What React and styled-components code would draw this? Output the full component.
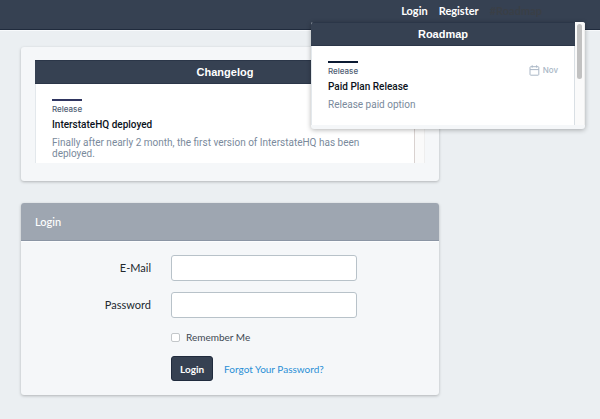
import React, { useState } from "react";
import styled, { createGlobalStyle } from "styled-components";

const GlobalStyle = createGlobalStyle`
  * {
    box-sizing: border-box;
  }

  body {
    margin: 0;
    background-color: #ebeff2;
    font-family: Lato, sans-serif;
    font-size: 11px;
    line-height: 16px;
    color: #22292f;
  }
`;

const NavBar = styled.nav`
  display: flex;
  justify-content: flex-end;
  gap: 11px;
  height: 30px;
  padding: 3px 58px 0 0;
  background-color: #364152;
  border-bottom: 1px solid #202b3d;
  box-shadow: 0 1px 0 #f8fafc;
`;

const NavLink = styled.a`
  color: ${({ $active }) => ($active ? "#3a3f46" : "#fff")};
  font-size: 11px;
  font-weight: 700;
  text-decoration: none;
`;

const NavItem = styled.div`
  position: relative;
`;

const Popup = styled.div`
  position: absolute;
  top: 19px;
  right: -43px;
  z-index: 1;
  width: 274px;
  padding-bottom: 4px;
  overflow: hidden;
  background-color: #f5f7f9;
  border-radius: 3px;
  box-shadow: 0 1px 5px rgba(0, 0, 0, 0.3);
`;

const Widget = styled.div`
  display: flex;
  min-height: 103px;
`;

const WidgetBody = styled.section`
  flex: 1;
  background-color: #fff;
  border-left: 1px solid #e3e8ec;
  border-right: 1px solid ${({ $edge }) => $edge || "#d9dfe4"};
`;

const WidgetTitle = styled.h2`
  height: 24px;
  margin: 0 -1px;
  background-color: #364152;
  border-top: 1px solid #2b3648;
  border-bottom: 1px solid #2b3648;
  color: #fff;
  font-family: "Liberation Sans", Arial, sans-serif;
  font-size: 11px;
  font-weight: 700;
  line-height: 22px;
  text-align: center;
`;

const ScrollTrack = styled.div`
  width: 10px;
  padding: 2px;
  background-color: #fafafa;
  border-right: 1px solid #eee;
`;

const ScrollThumb = styled.div`
  height: 55px;
  border-radius: 3px;
  background-color: #c1c1c1;
`;

const Entry = styled.article`
  display: flex;
  justify-content: space-between;
  padding: 15px 16px 0;
  font-family: Roboto, sans-serif;
`;

const Tag = styled.span`
  display: block;
  width: fit-content;
  padding-top: 2px;
  border-top: 2px solid ${({ $color }) => $color};
  color: #4f5d73;
  font-family: Inter, sans-serif;
  font-size: 8px;
  font-weight: 500;
  line-height: 12px;
`;

const EntryTitle = styled.h3`
  margin: 3px 0 0;
  color: #0b1220;
  font-size: 10px;
  font-weight: 500;
  line-height: 14px;
`;

const EntryText = styled.p`
  margin: 5px 0 0;
  color: #7a8a9c;
  font-size: 10px;
  line-height: 11px;
`;

const EntryDate = styled.span`
  display: flex;
  align-items: center;
  gap: 3px;
  height: 18px;
  color: #aab7c6;
  font-family: Inter, sans-serif;
  font-size: 8px;
  font-weight: 500;
`;

const Page = styled.main`
  display: flex;
  flex-direction: column;
  gap: 22px;
  padding: 17px 161px 24px 21px;
`;

const Card = styled.section`
  overflow: hidden;
  background-color: #f5f7f9;
  border-radius: 3px;
  box-shadow: 0 1px 3px rgba(0, 0, 0, 0.25);
`;

const CardBody = styled.div`
  padding: 13px 14px 18px;
`;

const CardHeader = styled.h1`
  margin: 0;
  padding: 11px 14px 10px;
  background-color: #9ea6b1;
  border-bottom: 1px solid #8b95a4;
  box-shadow: 0 1px 0 #fcfdfe;
  color: #fff;
  font-size: 11px;
  font-weight: 500;
`;

const LoginForm = styled.form`
  display: flex;
  flex-direction: column;
  gap: 11px;
  padding: 14px 82px 14px 0;
`;

const Field = styled.div`
  display: grid;
  grid-template-columns: 130px 1fr;
  gap: 20px;
  align-items: center;
`;

const FieldLabel = styled.label`
  text-align: right;
`;

const TextInput = styled.input`
  width: 100%;
  height: 26px;
  padding: 0 8px;
  background-color: #fff;
  border: 1px solid #b8c2c9;
  border-radius: 3px;
  font: inherit;
`;

const RememberLabel = styled.label`
  display: flex;
  grid-column: 2;
  align-items: center;
  gap: 6px;
  color: #3d4852;
  font-size: 10px;
`;

const Checkbox = styled.input`
  appearance: none;
  width: 9px;
  height: 9px;
  margin: 0;
  background-color: #fff;
  border: 1px solid #c3c7ca;
  border-radius: 2px;

  &:checked {
    background-color: #364152;
  }
`;

const Actions = styled.div`
  display: flex;
  grid-column: 2;
  align-items: center;
  gap: 11px;
`;

const Button = styled.button`
  height: 25px;
  padding: 0 8px;
  background-color: #364152;
  border: 1px solid #202b3d;
  border-radius: 3px;
  color: #fff;
  font-family: inherit;
  font-size: 10px;
  font-weight: 700;
  cursor: pointer;
`;

const TextLink = styled.a`
  color: #2a8fd6;
  font-size: 10px;
  text-decoration: none;
`;

const CalendarIcon = () => (
  <svg width="11" height="11" viewBox="0 0 11 11" fill="none" stroke="#aab7c6" aria-hidden="true">
    <rect x="1" y="1.7" width="8.8" height="8.5" rx="0.8" />
    <path d="M1 4.6h8.8M3.2 0.3v2.3M7.6 0.3v2.3" />
  </svg>
);

const Release = ({ title, text, color, date }) => (
  <Entry>
    <div>
      <Tag $color={color}>Release</Tag>
      <EntryTitle>{title}</EntryTitle>
      <EntryText>{text}</EntryText>
    </div>
    {date && (
      <EntryDate>
        <CalendarIcon />
        {date}
      </EntryDate>
    )}
  </Entry>
);

const App = () => {
  const [showRoadmap, setShowRoadmap] = useState(true);

  const handleRoadmapClick = (e) => {
    e.preventDefault();
    setShowRoadmap(!showRoadmap);
  };

  return (
    <>
      <GlobalStyle />
      <NavBar>
        <NavLink href="/login">Login</NavLink>
        <NavLink href="/register">Register</NavLink>
        <NavItem>
          <NavLink href="#roadmap" $active={showRoadmap} onClick={handleRoadmapClick}>
            #Roadmap
          </NavLink>
          {showRoadmap && (
            <Popup>
              <Widget>
                <WidgetBody>
                  <WidgetTitle>Roadmap</WidgetTitle>
                  <Release
                    title="Paid Plan Release"
                    text="Release paid option"
                    color="#0b1a33"
                    date="Nov"
                  />
                </WidgetBody>
                <ScrollTrack>
                  <ScrollThumb />
                </ScrollTrack>
              </Widget>
            </Popup>
          )}
        </NavItem>
      </NavBar>
      <Page>
        <Card>
          <CardBody>
            <Widget>
              <WidgetBody $edge="#d9d2d0">
                <WidgetTitle>Changelog</WidgetTitle>
                <Release
                  title="InterstateHQ deployed"
                  text="Finally after nearly 2 month, the first version of InterstateHQ has been deployed."
                  color="#2f3560"
                />
              </WidgetBody>
              <ScrollTrack />
            </Widget>
          </CardBody>
        </Card>
        <Card>
          <CardHeader>Login</CardHeader>
          <LoginForm onSubmit={(e) => e.preventDefault()}>
            <Field>
              <FieldLabel htmlFor="email">E-Mail</FieldLabel>
              <TextInput id="email" type="email" />
            </Field>
            <Field>
              <FieldLabel htmlFor="password">Password</FieldLabel>
              <TextInput id="password" type="password" />
            </Field>
            <Field>
              <RememberLabel>
                <Checkbox type="checkbox" name="remember" />
                Remember Me
              </RememberLabel>
            </Field>
            <Field>
              <Actions>
                <Button type="submit">Login</Button>
                <TextLink href="/password/reset">Forgot Your Password?</TextLink>
              </Actions>
            </Field>
          </LoginForm>
        </Card>
      </Page>
    </>
  );
};

export default App;
